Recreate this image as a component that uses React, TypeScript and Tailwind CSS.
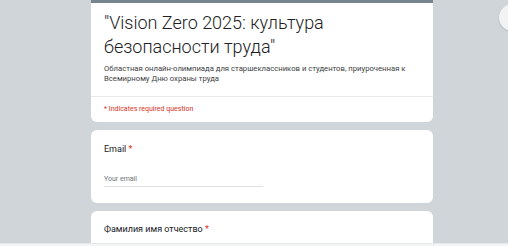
export default function App() {
  return (
    <div className="relative h-[246px] w-[508px] overflow-hidden bg-[#d0d5d9] font-['Roboto',sans-serif] text-[#202124]">
      <div className="h-[243px] overflow-hidden pl-[91px]">
        <div className="flex w-[342px] flex-col gap-[8px]">
          <div className="overflow-hidden rounded-b-[6px] bg-white">
            <div className="h-[3px] bg-[#77858f]" />
            <div className="px-[13px] pb-[12px] pt-[8px]">
              <h1 className="text-[18px] font-light leading-[24px]">
                "Vision Zero 2025: культура безопасности труда"
              </h1>
              <p className="mt-[5px] text-[7.7px] leading-[10px] text-[#3c4043]">
                Областная онлайн-олимпиада для старшеклассников и студентов, приуроченная к Всемирному Дню охраны труда
              </p>
            </div>
            <div className="border-t border-[#e8eaed] px-[13px] pb-[8px] pt-[7px] text-[7px] leading-[10px] text-[#d93025]">
              * Indicates required question
            </div>
          </div>

          <div className="h-[73px] rounded-[6px] bg-white px-[13px] pt-[13px]">
            <div className="text-[9px] leading-[12px]">
              Email <span className="text-[#d93025]">*</span>
            </div>
            <div className="mt-[19px] w-[159px] border-b border-[#e0e0e0] pb-[2px] text-[7px] leading-[10px] text-[#70757a]">
              Your email
            </div>
          </div>

          <div className="h-[60px] rounded-[6px] bg-white px-[13px] pt-[12px]">
            <div className="text-[9px] leading-[12px]">
              Фамилия имя отчество <span className="text-[#d93025]">*</span>
            </div>
          </div>
        </div>
      </div>
      <div className="h-[3px] border-t border-[#e4e7ea] bg-[#f4f5f6]" />
      <div className="absolute left-[499px] top-[4px] h-[27px] w-[27px] rounded-full bg-[#f1f3f4] shadow-[0_1px_2px_rgba(0,0,0,0.15)]" />
    </div>
  );
}
